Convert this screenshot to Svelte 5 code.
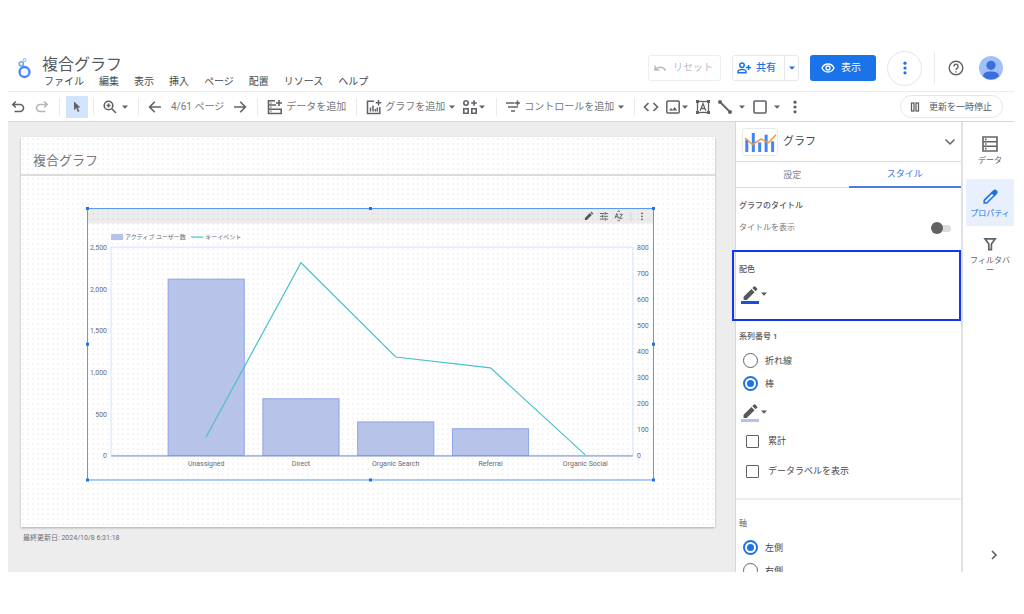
<script>
  const menus = ['ファイル', '編集', '表示', '挿入', 'ページ', '配置', 'リソース', 'ヘルプ'];
  const leftTicks = ['2,500', '2,000', '1,500', '1,000', '500', '0'];
  const rightTicks = ['800', '700', '600', '500', '400', '300', '200', '100', '0'];
  const bars = [
    { name: 'Unassigned', users: 2115 },
    { name: 'Direct', users: 680 },
    { name: 'Organic Search', users: 402 },
    { name: 'Referral', users: 320 },
    { name: 'Organic Social', users: 0 }
  ];
  const events = [72, 740, 378, 336, 2];
  const plot = { x: 24, y: 39, w: 521, h: 208 };
  const step = 94.6;
  const cx = (i) => 119 + i * step;
  const barH = (v) => (v / 2500) * plot.h;
  const eventY = (v) => plot.y + plot.h - (v / 800) * plot.h;
  const points = events.map((v, i) => `${cx(i)},${eventY(v)}`).join(' ');

  let seriesType = $state('bar');
  let axis = $state('left');
</script>

{#snippet caret()}
  <svg class="caret" viewBox="0 0 8 8" aria-hidden="true"><path d="M1 2.500h6L4 5.800z" fill="currentColor" /></svg>
{/snippet}

{#snippet dots()}
  <svg class="i16" viewBox="0 0 16 16" aria-hidden="true">
    <circle cx="8" cy="3.200" r="1.600" /><circle cx="8" cy="8" r="1.600" /><circle cx="8" cy="12.800" r="1.600" />
  </svg>
{/snippet}

{#snippet pencil(color)}
  <svg class="pencil" viewBox="0 0 18 20" aria-hidden="true">
    <path d="M2.600 16v-3.200L10.400 5l3.200 3.200L5.800 16zM11.300 4.100l1.600-1.600a.9.9 0 0 1 1.300 0l1.900 1.900a.9.9 0 0 1 0 1.300l-1.600 1.600z" fill="#55585c" />
    <rect x="0" y="17" width="18" height="3" fill={color} />
  </svg>
{/snippet}

<div class="app">
  <header>
    <svg class="logo" viewBox="0 0 16 22" aria-hidden="true" fill="none" stroke="#4285f4">
      <circle cx="8.500" cy="15" r="5" stroke-width="2.300" />
      <circle cx="5.300" cy="6.800" r="2.100" stroke-width="1.500" stroke="#6ba0f8" />
      <circle cx="8.700" cy="3" r="1.400" stroke-width="1.100" stroke="#9cc0fb" />
    </svg>
    <div class="heading">
      <h1>複合グラフ</h1>
      <nav>
        {#each menus as m}<button>{m}</button>{/each}
      </nav>
    </div>
    <div class="actions">
      <button class="box reset">
        <svg class="i14" viewBox="0 0 14 14" fill="none" stroke="currentColor" stroke-width="1.500"><path d="M2 4.500v4.500h4.500M2.300 8.500C5 5.500 10 5.300 12.500 9.500" /></svg>
        リセット
      </button>
      <div class="split">
        <button class="share">
          <svg class="i14" viewBox="0 0 14 14" fill="none" stroke="currentColor" stroke-width="1.500">
            <circle cx="5" cy="4.300" r="2.200" /><path d="M1 11.800v-1.300c0-1.200 2.500-2 4-2s4 .8 4 2v1.300zM11.500 4v5M9 6.500h5" />
          </svg>
          共有
        </button>
        <button class="more" aria-label="共有オプション">{@render caret()}</button>
      </div>
      <button class="view">
        <svg class="i14" viewBox="0 0 14 14" fill="none" stroke="currentColor" stroke-width="1.300">
          <path d="M1 7c1.200-2.700 3.400-4 6-4s4.800 1.300 6 4c-1.200 2.700-3.400 4-6 4S2.200 9.700 1 7z" /><circle cx="7" cy="7" r="2" />
        </svg>
        表示
      </button>
      <button class="round" aria-label="その他">{@render dots()}</button>
      <span class="rule"></span>
      <button class="help" aria-label="ヘルプ">
        <svg class="i16" viewBox="0 0 16 16" fill="none" stroke="currentColor" stroke-width="1.400">
          <circle cx="8" cy="8" r="6.800" /><path d="M5.900 6.500a2.100 2.100 0 1 1 3.300 1.600C8.400 8.700 8 9 8 10" /><path d="M8 11.200v1.300" />
        </svg>
      </button>
      <button class="avatar" aria-label="アカウント">
        <svg viewBox="0 0 24 24"><circle cx="12" cy="12" r="12" fill="#a0c0fb" /><circle cx="12" cy="9.300" r="4.600" fill="#3b6fdc" /><path d="M4 20.500c0-4 4-5 8-5s8 1 8 5a12 12 0 0 1-16 0z" fill="#3b6fdc" /></svg>
      </button>
    </div>
  </header>

  <div class="toolbar">
    <div class="group first">
      <button aria-label="元に戻す"><svg class="i16" viewBox="0 0 16 16" fill="none" stroke="currentColor" stroke-width="1.600"><path d="M5.800 2.500L2.800 5.500l3 3M3 5.500h7a3.500 3.500 0 0 1 0 7H4.500" /></svg></button>
      <button class="off" aria-label="やり直し"><svg class="i16" viewBox="0 0 16 16" fill="none" stroke="currentColor" stroke-width="1.600"><path d="M10.200 2.500l3 3-3 3M13 5.500H6a3.500 3.500 0 0 0 0 7h5.500" /></svg></button>
    </div>
    <div class="group tight">
      <button class="pointer" aria-label="選択"><svg class="i16" viewBox="0 0 16 16"><path d="M5 2.500l6.500 6H8.700l1.700 3.800-1.500.7-1.700-3.900L5 11.200z" fill="currentColor" /></svg></button>
    </div>
    <div class="group">
      <button class="pair" aria-label="ズーム">
        <svg class="i16" viewBox="0 0 16 16" fill="none" stroke="currentColor" stroke-width="1.600"><circle cx="6.500" cy="6.500" r="4.300" /><path d="M9.800 9.800L14 14M6.500 4.500v4M4.500 6.500h4" /></svg>
        {@render caret()}
      </button>
    </div>
    <div class="group">
      <button aria-label="前のページ"><svg class="i16" viewBox="0 0 16 16" fill="none" stroke="currentColor" stroke-width="1.600"><path d="M14 8H3M7.800 2.800L2.600 8l5.200 5.200" /></svg></button>
      <span>4/61 ページ</span>
      <button aria-label="次のページ"><svg class="i16" viewBox="0 0 16 16" fill="none" stroke="currentColor" stroke-width="1.600"><path d="M2 8h11M8.200 2.800L13.400 8l-5.200 5.200" /></svg></button>
    </div>
    <div class="group add">
      <button>
        <svg class="i16" viewBox="0 0 16 16" fill="none" stroke="currentColor" stroke-width="1.600"><path d="M8 1.800H1.500v12.700h12.700V9.500M1.500 6H9M1.500 10.200h12.700M12 1v6M9 4h6M3.500 4h1M3.500 8.200h1M3.500 12.400h1" /></svg>
        <span>データを追加</span>
      </button>
    </div>
    <div class="group add">
      <button>
        <svg class="i16" viewBox="0 0 16 16" fill="none" stroke="currentColor" stroke-width="1.500"><path d="M8 2.200H1.500v12.300h12.300V8M12.500 1v5.500M9.700 3.700h5.600M4.500 12.500V8.500M7 12.500V6.500M9.300 12.500V10M11.300 12.500V8.500" /></svg>
        <span>グラフを追加</span>{@render caret()}
      </button>
      <button class="snug" aria-label="コミュニティ ビジュアリゼーション">
        <svg class="i16" viewBox="0 0 16 16" fill="none" stroke="currentColor" stroke-width="1.600"><circle cx="4" cy="4" r="2.200" /><path d="M12 1.200v5.600M9.200 4h5.600M1.800 9.800h4.400v4.400H1.800zM9.800 9.800h4.400v4.400H9.800z" /></svg>
        {@render caret()}
      </button>
    </div>
    <div class="group">
      <button>
        <svg class="i16" viewBox="0 0 16 16" fill="none" stroke="currentColor" stroke-width="1.600"><path d="M1 4h8.500M3 8h10M6 12h4M12.500 1.500v5M10 4h5" /></svg>
        <span>コントロールを追加</span>{@render caret()}
      </button>
    </div>
    <div class="group insert">
      <button aria-label="URL の埋め込み"><svg class="i16" viewBox="0 0 16 16" fill="none" stroke="currentColor" stroke-width="1.600"><path d="M5.500 4L1.500 8l4 4M10.500 4l4 4-4 4" /></svg></button>
      <button class="snug" aria-label="画像"><svg class="i16" viewBox="0 0 16 16" fill="none" stroke="currentColor" stroke-width="1.500"><rect x="1.800" y="2" width="12.400" height="12" rx="1" /><path d="M4 11.500l2-2.500 1.500 1.700L9.700 8l2.500 3.500z" fill="currentColor" stroke="none" /></svg>{@render caret()}</button>
      <button aria-label="テキスト"><svg class="i16" viewBox="0 0 16 16" fill="none" stroke="currentColor" stroke-width="1.300"><rect x="2.500" y="2.500" width="11" height="11" /><path d="M5.200 11.800L8 4.500l2.800 7.300M6.200 9.500h3.600" /><path d="M1 1h3v3H1zM12 1h3v3h-3zM1 12h3v3H1zM12 12h3v3h-3z" fill="currentColor" stroke="none" /></svg></button>
      <button class="pair" aria-label="線"><svg class="i16" viewBox="0 0 16 16"><path d="M3 3l10 10" stroke="currentColor" stroke-width="1.800" /><circle cx="3" cy="3" r="2" fill="currentColor" /><circle cx="13" cy="13" r="2" fill="currentColor" /></svg>{@render caret()}</button>
      <button class="pair" aria-label="図形"><svg class="i16" viewBox="0 0 16 16" fill="none" stroke="currentColor" stroke-width="1.600"><rect x="2" y="2" width="12" height="12" rx="1" /></svg>{@render caret()}</button>
      <button aria-label="その他">{@render dots()}</button>
    </div>
    <button class="pause">
      <svg class="i10" viewBox="0 0 10 10" fill="none" stroke="currentColor" stroke-width="1.200"><rect x="1.500" y="1" width="2.500" height="8" /><rect x="6" y="1" width="2.500" height="8" /></svg>
      更新を一時停止
    </button>
  </div>

  <div class="work">
    <main>
      <section class="sheet">
        <h2>複合グラフ</h2>
        <svg class="chart" viewBox="0 0 574 280" role="img" aria-label="複合グラフ">
          <g transform="translate(4 4)">
            <rect x="0.500" y="0.500" width="565" height="15" fill="#000" fill-opacity=".075" />
            <g fill="#55585c">
              <path d="M497 12v-2l5-5 2 2-5 5zM502.600 4.400l.8-.8 2 2-.8.8z" />
              <path d="M512 5.500h4.500M518 5.500h2M517.300 4v3M512 8.300h2M515.500 8.300h4.500M514.700 6.800v3M512 11.100h4.500M518 11.100h2M517.300 9.600v3" stroke="#55585c" stroke-width=".9" />
              <path d="M527 10.300l1.800-4.800 1.800 4.800M527.600 8.800h2.400M531.500 6.300h3l-3 4h3M529.500 4l1.300-1.300L532.100 4M529.500 11.800l1.300 1.300 1.300-1.300" stroke="#55585c" stroke-width=".9" fill="none" />
              <circle cx="554" cy="5.300" r=".9" /><circle cx="554" cy="8.300" r=".9" /><circle cx="554" cy="11.300" r=".9" />
            </g>
            <path d="M543 4v9" stroke="#d4d4d4" />
            <rect x="24" y="26" width="12" height="6" fill="#b7c2e9" />
            <text class="legend" x="38" y="31">アクティブ ユーザー数</text>
            <path d="M104 29h12" stroke="#5fcdd8" stroke-width="1.400" />
            <text class="legend" x="118" y="31">キーイベント</text>

            <rect x={plot.x} y={plot.y} width={plot.w} height={plot.h} fill="none" stroke="#d3e0fa" />
            {#each bars as b, i}
              {#if b.users > 0}
                <rect x={cx(i) - 38} y={plot.y + plot.h - barH(b.users)} width="76" height={barH(b.users)} fill="#b8c3e9" stroke="#8ca4ea" />
              {/if}
              <text x={cx(i)} y="258" text-anchor="middle">{b.name}</text>
            {/each}
            <path d="M24 247.500h521" stroke="#7f92c9" />
            {#each leftTicks as t, i}
              <text x="20" y={42 + i * 41.600} text-anchor="end">{t}</text>
            {/each}
            {#each rightTicks as t, i}
              <text x="549" y={42 + i * 26}>{t}</text>
            {/each}
            <polyline {points} fill="none" stroke="#49c0cd" stroke-width="1.200" />

            <rect x="0.500" y="0.500" width="565" height="271" fill="none" stroke="#5e97f6" />
            {#each [0.5, 283, 565.5] as hx}
              {#each [0.5, 136, 271.5] as hy}
                {#if !(hx === 283 && hy === 136)}
                  <rect x={hx - 1.5} y={hy - 1.5} width="3" height="3" fill="#1a73e8" />
                {/if}
              {/each}
            {/each}
          </g>
        </svg>
      </section>
      <p class="updated">最終更新日: 2024/10/8 6:31:18</p>
    </main>

    <aside class="panel">
      <div class="type">
        <svg class="thumb" viewBox="0 0 36 28" aria-hidden="true">
          <rect x=".5" y=".5" width="35" height="27" rx="3" fill="#fff" stroke="#e8e8e8" />
          <g fill="#4285f4"><rect x="3.300" y="11.700" width="3" height="12.300" /><rect x="9.800" y="5" width="3" height="19" /><rect x="16.200" y="14.300" width="3" height="9.700" /><rect x="22.600" y="6.700" width="3" height="17.300" /><rect x="29.100" y="13.300" width="3" height="10.700" /></g>
          <path d="M3 10l7.500 6.500L19 11l7.500 3.700L34 6.700" fill="none" stroke="#fa903e" stroke-width="1.500" />
        </svg>
        <span>グラフ</span>
        <button aria-label="グラフの種類を開く"><svg class="i14" viewBox="0 0 14 14" fill="none" stroke="currentColor" stroke-width="1.500"><path d="M2.500 4.500L7 9l4.500-4.500" /></svg></button>
      </div>
      <div class="tabs" role="tablist">
        <button role="tab" aria-selected="false">設定</button>
        <button role="tab" aria-selected="true" class="on">スタイル</button>
      </div>
      <div class="title-block">
        <h3>グラフのタイトル</h3>
        <label>タイトルを表示<input type="checkbox" role="switch" class="switch" /></label>
      </div>
      <div class="palette">
        <h3>配色</h3>
        <button class="color" aria-label="配色の色">{@render pencil('#1a4fdc')}{@render caret()}</button>
      </div>
      <div class="series">
        <h3>系列番号 1</h3>
        <label class="radio"><input type="radio" value="line" bind:group={seriesType} />折れ線</label>
        <label class="radio"><input type="radio" value="bar" bind:group={seriesType} />棒</label>
        <button class="color" aria-label="系列の色">{@render pencil('#b4c0ee')}{@render caret()}</button>
        <label class="check"><input type="checkbox" />累計</label>
        <label class="check"><input type="checkbox" />データラベルを表示</label>
      </div>
      <div class="axis">
        <h3>軸</h3>
        <label class="radio"><input type="radio" value="left" bind:group={axis} />左側</label>
        <label class="radio"><input type="radio" value="right" bind:group={axis} />右側</label>
      </div>
    </aside>

    <nav class="rail">
      <button>
        <svg class="i18" viewBox="0 0 18 18" fill="none" stroke="currentColor" stroke-width="1.600"><path d="M2 2h14v14H2zM2 6.700h14M2 11.300h14" /><path d="M4 4.400h1.600M4 9h1.600M4 13.600h1.600" /></svg>
        データ
      </button>
      <button class="on">
        <svg class="i18" viewBox="0 0 18 18" fill="none" stroke="currentColor" stroke-width="1.600"><path d="M3.200 15v-2.600l7.800-7.800 2.600 2.600L5.800 15z" /><path d="M11.600 4l1.200-1.200a1.500 1.500 0 0 1 2.200 0l.4.4a1.500 1.500 0 0 1 0 2.200l-1.200 1.200z" fill="currentColor" /></svg>
        プロパティ
      </button>
      <button>
        <svg class="i18" viewBox="0 0 18 18" fill="none" stroke="currentColor" stroke-width="1.700"><path d="M4 3.800h10.200L10.400 9v5.700H7.800V9z" /></svg>
        フィルタバー
      </button>
      <button class="collapse" aria-label="パネルを閉じる"><svg class="i14" viewBox="0 0 14 14" fill="none" stroke="currentColor" stroke-width="1.700"><path d="M5 3l4 4-4 4" /></svg></button>
    </nav>
  </div>
</div>

<style>
  :global(body) { background: #fff; }
  .app {
    box-sizing: border-box;
    height: 100vh;
    padding: 42px 10px 42px 8px;
    display: flex;
    flex-direction: column;
    font-family: Roboto, "Noto Sans CJK JP", sans-serif;
    font-size: 10px;
    line-height: 14px;
    color: #5f6368;
  }
  .app :global(*) { box-sizing: border-box; }
  button { font: inherit; color: inherit; background: none; border: 0; padding: 0; margin: 0; display: flex; align-items: center; white-space: nowrap; }
  h1, h2, h3, p { margin: 0; font-weight: 400; }
  svg { display: block; flex: none; }
  input { appearance: none; margin: 0; flex: none; }
  .i10 { width: 10px; height: 10px; }
  .i14 { width: 14px; height: 14px; }
  .i16 { width: 16px; height: 16px; fill: currentColor; }
  .i16[fill="none"] { fill: none; }
  .i18 { width: 18px; height: 18px; }
  .caret { width: 8px; height: 8px; }

  header { display: flex; height: 49px; flex: none; padding: 0 11px 0 8px; }
  .logo { width: 16px; height: 22px; margin-top: 15px; }
  .heading { margin-left: 10px; }
  h1 { font-size: 16px; line-height: 20px; margin-top: 13px; color: #55585c; }
  nav { display: flex; }
  .heading nav { gap: 15px; padding-left: 2px; color: #45484c; }
  .actions { display: flex; align-items: center; margin-left: auto; height: 52px; }
  .reset { width: 73px; height: 26px; gap: 6px; padding-left: 4px; color: #b9bbbe; border: 1px solid #eee; border-radius: 3px; }
  .split { display: flex; height: 26px; margin-left: 11px; border: 1px solid #e6e8eb; border-radius: 3px; color: #1a73e8; font-weight: 500; }
  .share { width: 51px; gap: 5px; padding-left: 4px; }
  .more { width: 14px; justify-content: center; border-left: 1px solid #e6e8eb; }
  .view { width: 66px; height: 26px; margin-left: 11px; gap: 6px; padding-left: 11px; color: #fff; background: #1a73e8; border-radius: 3px; }
  .round { width: 35px; height: 35px; margin-left: 11px; justify-content: center; border: 1px solid #e4e6e9; border-radius: 50%; color: #1a73e8; }
  .rule { width: 1px; height: 32px; margin: 0 13px 0 12px; background: #e8eaed; }
  .avatar { margin-left: 15px; }
  .avatar svg { width: 24px; height: 24px; }

  .toolbar { display: flex; align-items: center; height: 31px; flex: none; border-top: 1px solid #ececec; border-bottom: 1px solid #d5d8dc; padding-right: 11px; }
  .group { display: flex; align-items: center; height: 18px; gap: 8px; padding: 0 9px 0 8px; border-right: 1px solid #e8eaed; }
  .group button { gap: 3px; }
  .group span { color: #74777b; }
  .group .snug { gap: 0; }
  .first { padding-left: 2px; }
  .tight { padding: 0 5px 0 6px; }
  .add { gap: 6px; padding: 0 10px 0 9px; }
  .off { color: #b4b6b9; }
  .pointer { width: 22px; height: 22px; justify-content: center; background: #d2e3fc; }
  .insert { border-right: 0; gap: 6px; }
  .insert .pair { gap: 5px; }
  .pause { height: 23px; margin-left: auto; gap: 9px; padding: 0 10px 0 9px; font-size: 9px; border: 1px solid #e4e6e9; border-radius: 12px; color: #55585c; }

  .work { display: flex; flex: 1; min-height: 0; }
  main { flex: 1; min-width: 0; padding: 15px 20px 0 13px; background: #ededed; overflow: hidden; }
  .sheet {
    background: radial-gradient(circle at 2px 2px, #f5f5f5 0, #f5f5f5 1px, transparent 1px) 0 0 / 5px 5px #fff;
    box-shadow: 0 1px 2px rgba(0, 0, 0, .28);
    padding-bottom: 43px;
  }
  h2 { height: 39px; padding: 14px 12px 0; font-size: 13px; line-height: 20px; color: #757783; border-bottom: 2px solid #dcdcdc; }
  .chart { width: 100%; padding: 28px 57px 0 62px; height: auto; }
  .chart text { font-size: 7px; fill: #6a6b74; }
  .chart .legend { font-size: 6px; }
  .updated { margin-top: 4px; padding-left: 2px; font-size: 7px; color: #6d6f72; }

  .panel { width: 228px; flex: none; border-left: 1px solid #d5d8dc; border-right: 2px solid #dfe1e5; overflow-x: visible; overflow-y: clip; }
  .type { display: flex; align-items: center; height: 39px; padding: 0 4px 0 6px; font-size: 11px; color: #45484c; }
  .thumb { width: 36px; height: 28px; margin-right: 5px; }
  .type button { margin-left: auto; color: #5f6368; }
  .tabs { display: grid; grid-template-columns: 1fr 1fr; height: 27px; border-top: 1px solid #dadce0; }
  .tabs button { justify-content: center; font-size: 9px; color: #80868b; border-bottom: 1px solid #dadce0; }
  .tabs .on { color: #3b74e0; border-bottom: 2px solid #4a7de2; }
  h3 { font-size: 8px; line-height: 12px; font-weight: 500; color: #55585c; }
  .title-block { height: 62px; padding: 12px 10px 0 3px; }
  .title-block label { display: flex; align-items: center; justify-content: space-between; margin-top: 9px; font-size: 8px; color: #76797d; }
  .switch { display: flex; align-items: center; width: 14px; height: 7px; border-radius: 4px; background: #dcdcdc; }
  .switch::before { content: ""; width: 12px; height: 12px; flex: none; margin-left: -6px; border-radius: 50%; background: #616161; }
  .palette { height: 71px; margin: 0 0 0 -4px; padding: 12px 4px 0 5px; border: 2px solid #1237f2; }
  .color { gap: 1px; margin-left: 2px; }
  .palette .color { margin-top: 8px; }
  .pencil { width: 18px; height: 20px; }
  .color .caret { color: #55585c; }
  .series { padding: 10px 3px 12px; border-bottom: 2px solid #eee; }
  .radio, .check { display: flex; align-items: center; font-size: 9px; color: #45484c; }
  .radio { height: 23px; padding-left: 4px; gap: 7px; }
  h3 + .radio { margin-top: 6px; }
  .radio input { width: 15px; height: 15px; border: 1px solid #5f6368; border-radius: 50%; }
  .radio input:checked { border: 2px solid #1a73e8; background: #1a73e8; background-clip: content-box; padding: 2px; }
  .series .color { margin: 7px 0 4px 2px; }
  .check { height: 30px; padding-left: 7px; gap: 9px; }
  .check input { width: 13px; height: 13px; border: 1px solid #5f6368; border-radius: 1px; }
  .axis { padding: 18px 3px 0; }
  .axis h3 { color: #80868b; }

  .rail { flex-direction: column; width: 51px; flex: none; padding: 10px 0 10px 3px; }
  .rail button { flex-direction: column; gap: 3px; width: 48px; height: 47px; padding: 3px 2px; font-size: 8px; line-height: 10px; white-space: normal; word-break: break-all; text-align: center; color: #5f6368; }
  .rail .on { margin: 0 0 6px; padding-top: 9px; background: #e8f0fe; color: #1a73e8; }
  .rail .collapse { height: 14px; margin-top: auto; padding: 0 0 0 8px; }
</style>
